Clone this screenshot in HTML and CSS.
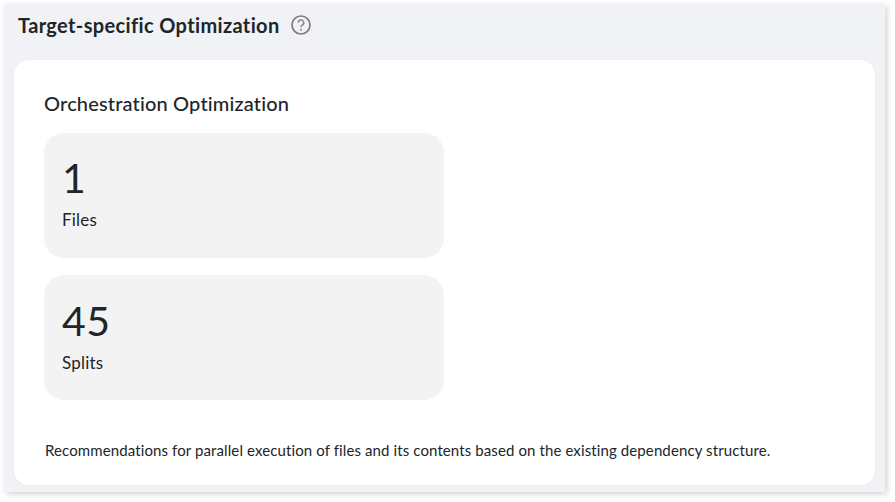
FILE: index.html
```
<!DOCTYPE html>
<html lang="en">
<head>
<meta charset="utf-8">
<title>Target-specific Optimization</title>
<link rel="stylesheet" href="styles.css">
</head>
<body>
<section class="panel">
  <header class="panel-head">
    <h2 class="panel-title">Target-specific Optimization</h2>
    <svg class="help" viewBox="0 0 20 20" width="20" height="20" aria-hidden="true">
      <circle cx="10" cy="10" r="9" fill="none" stroke="#7b7b7b" stroke-width="1.7"/>
      <path d="M7.3 7.8a2.7 2.7 0 1 1 4.1 2.2c-1 .7-1.4 1.1-1.4 2.2" fill="none" stroke="#8a8a8a" stroke-width="1.5"/>
      <circle cx="10" cy="14.8" r="1" fill="#8a8a8a"/>
    </svg>
  </header>
  <div class="card">
    <h3 class="card-title">Orchestration Optimization</h3>
    <div class="metrics">
      <div class="metric"><div class="value">1</div><div class="label">Files</div></div>
      <div class="metric"><div class="value">45</div><div class="label">Splits</div></div>
    </div>
    <p class="note">Recommendations for parallel execution of files and its contents based on the existing dependency structure.</p>
  </div>
</section>
</body>
</html>
```
FILE: styles.css
```
* { box-sizing: border-box; }
html, body { height: 100%; }
body {
  margin: 0;
  padding: 4px 10px 10px 4px;
  background: #fff;
  font-family: Lato, "Open Sans", sans-serif;
  color: #212529;
  overflow: hidden;
}
.panel {
  width: 881px;
  height: 488px;
  background: #f0f2f6;
  box-shadow: 2px 2px 6px rgba(0,0,0,.18);
  padding: 0 10px 7px;
  display: flex;
  flex-direction: column;
}
.panel-head {
  height: 56px;
  padding: 0 0 14px 4px;
  display: flex;
  align-items: center;
  gap: 11px;
}
.panel-title {
  margin: 0;
  font-size: 20px;
  font-weight: 700;
  line-height: 24px;
  letter-spacing: .36px;
}
.help { flex: none; }
.card {
  flex: 1;
  background: #fff;
  border-radius: 14px;
  padding: 32px 30px 0;
  box-shadow: 0 0 1px rgba(0,0,0,.15);
}
.card-title {
  margin: 0 0 18px;
  font-size: 20px;
  font-weight: 500;
  line-height: 23px;
  letter-spacing: .16px;
}
.metrics {
  display: flex;
  flex-direction: column;
  gap: 17px;
}
.metric {
  width: 400px;
  height: 125px;
  background: #f3f3f4;
  border-radius: 20px;
  padding: 18px 18px 0;
}
.metric + .metric { padding-top: 19px; }
.value {
  font-size: 41px;
  line-height: 54px;
  font-weight: 400;
  letter-spacing: .4px;
}
.label {
  margin-top: 3px;
  font-size: 17px;
  line-height: 24px;
  letter-spacing: .2px;
}
.note {
  margin: 40px 0 0;
  padding-left: 1px;
  font-size: 15px;
  line-height: 20px;
  letter-spacing: .11px;
}
```
